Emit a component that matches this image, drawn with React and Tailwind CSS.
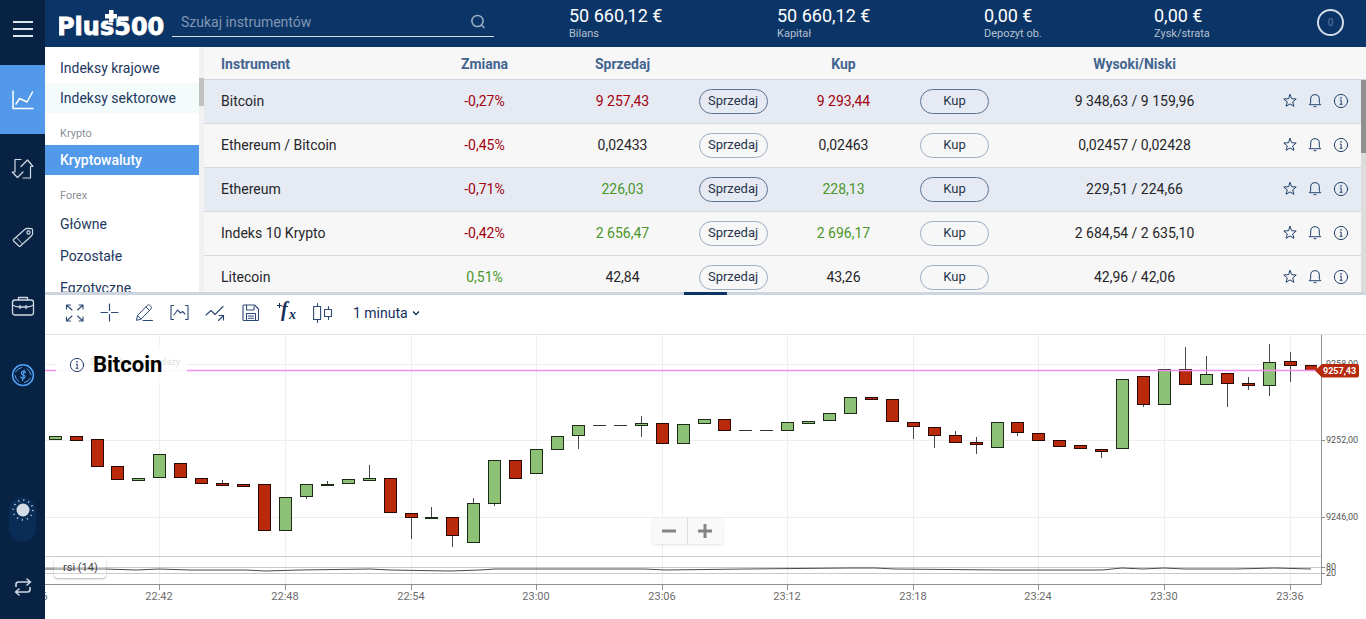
import React, { useState } from 'react';
import clsx from 'clsx';

const categories = [
  { title: null, items: ['Indeksy krajowe', 'Indeksy sektorowe'] },
  { title: 'Krypto', items: ['Kryptowaluty'] },
  { title: 'Forex', items: ['Główne', 'Pozostałe', 'Egzotyczne'] },
];

const balances = [
  { label: 'Bilans', value: '50 660,12 €' },
  { label: 'Kapitał', value: '50 660,12 €' },
  { label: 'Depozyt ob.', value: '0,00 €' },
  { label: 'Zysk/strata', value: '0,00 €' },
];

const instruments = [
  { name: 'Bitcoin', change: '-0,27%', sell: '9 257,43', buy: '9 293,44', range: '9 348,63 / 9 159,96', trend: 'down', marked: true },
  { name: 'Ethereum / Bitcoin', change: '-0,45%', sell: '0,02433', buy: '0,02463', range: '0,02457 / 0,02428' },
  { name: 'Ethereum', change: '-0,71%', sell: '226,03', buy: '228,13', range: '229,51 / 224,66', trend: 'up', marked: true },
  { name: 'Indeks 10 Krypto', change: '-0,42%', sell: '2 656,47', buy: '2 696,17', range: '2 684,54 / 2 635,10', trend: 'up' },
  { name: 'Litecoin', change: '0,51%', sell: '42,84', buy: '43,26', range: '42,96 / 42,06' },
];

const trendColor = { up: 'text-[#4b962a]', down: 'text-[#a3000f]' };

// [direction, body top, body bottom, high, low], one per minute
const candles = [
  ['u', 101, 104], ['d', 101, 105], ['d', 104, 131], ['d', 131, 144], ['u', 143, 145],
  ['u', 119, 142], ['d', 128, 142], ['d', 143, 148], ['d', 148, 150, 145], ['d', 149, 151],
  ['d', 149, 195], ['u', 162, 195], ['u', 149, 161, 149, 163], ['u', 149, 150, 146], ['u', 144, 148],
  ['u', 143, 145, 130], ['d', 143, 177], ['d', 178, 182, 178, 203], ['u', 182, 183, 172], ['d', 182, 200, 182, 211],
  ['u', 168, 207, 163], ['u', 125, 168, 125, 170], ['d', 125, 143], ['u', 114, 138], ['u', 101, 114],
  ['u', 90, 100, 90, 113], ['f', 90, 90], ['f', 90, 90], ['u', 88, 90, 81, 101], ['d', 88, 108],
  ['u', 89, 108], ['u', 84, 88], ['d', 84, 95], ['f', 95, 95], ['f', 95, 95],
  ['u', 87, 95], ['u', 86, 88], ['u', 78, 85], ['u', 62, 78], ['d', 62, 64],
  ['d', 64, 86], ['d', 87, 91, 87, 103], ['d', 92, 100, 92, 112], ['d', 100, 107, 96], ['d', 107, 109, 102, 118],
  ['u', 87, 112], ['d', 87, 97, 87, 100], ['d', 98, 105], ['d', 105, 111], ['d', 110, 113],
  ['d', 114, 116, 114, 122], ['u', 44, 113], ['d', 41, 69, 41, 71], ['u', 34, 69], ['d', 34, 49, 12],
  ['u', 39, 49, 21], ['d', 38, 48, 38, 71], ['d', 48, 50, 42, 54], ['u', 27, 50, 9, 60], ['d', 26, 30, 17, 46],
  ['d', 30, 35],
];

const candleX = (i) => Math.round(9.7 + i * 20.93);

const times = ['22:36', '22:42', '22:48', '22:54', '23:00', '23:06', '23:12', '23:18', '23:24', '23:30', '23:36'];
const timeX = (i) => candleX(i * 6 - 1);

const rsi =
  '0,234 60,234 91,235 114,234 145,235 200,235 220,236 255,235 325,234 345,235 405,236 435,235 450,234 492,234 600,234 620,235 700,234 805,233 830,233 850,234 955,235 1057,235 1077,233 1098,234 1119,233 1140,234 1190,234 1230,233 1266,234';

const Icon = ({ size = 24, children, className, width = 1.2 }) => (
  <svg
    width={size}
    height={size}
    viewBox={`0 0 ${size} ${size}`}
    fill="none"
    stroke="currentColor"
    strokeWidth={width}
    strokeLinecap="round"
    strokeLinejoin="round"
    className={className}
    aria-hidden="true"
  >
    {children}
  </svg>
);

const InfoIcon = () => (
  <Icon size={16} width={1}>
    <circle cx="8" cy="8" r="6.6" />
    <path d="M7.200 7.200h1v3.800M7 11.300h2" />
    <circle cx="8" cy="4.900" r=".8" fill="currentColor" stroke="none" />
  </Icon>
);

const navItems = [
  {
    label: 'Handel',
    icon: (
      <Icon width={1.5}>
        <path d="M2 3v17.500h20" />
        <path d="M5 16l3.500-5.500L16 14l5.500-10" />
      </Icon>
    ),
  },
  {
    label: 'Otwarte pozycje',
    icon: (
      <Icon width={1.2}>
        <path d="M10 2.500H4V15H1.200l5.300 5.500L12 15" />
        <path d="M10 9.500L16.500 3l5.500 6.500h-2.500V21h-7.500" />
      </Icon>
    ),
  },
  {
    label: 'Zlecenia',
    icon: (
      <Icon>
        <path d="M2.500 13.500L14 3.200q1-.9 2.500-.9l4 .3q1 .2 1 1.200l.1 3.700q0 1.200-1 2.200L9.500 20q-.8.700-1.600 0l-5.300-5q-.7-.8-.1-1.500z" />
        <circle cx="17.500" cy="6.500" r="1.600" />
        <path d="M5.500 11.500l5.500 6" strokeWidth=".9" />
      </Icon>
    ),
  },
  {
    label: 'Zamknięte pozycje',
    icon: (
      <Icon width={1.3}>
        <rect x="1.500" y="5" width="21" height="15" rx="2.500" />
        <path d="M7.500 5V2.500h9V5M1.500 10q3 2 7 2h7q4 0 7-2" />
        <path d="M9 10.500v3M15 10.500v3" />
      </Icon>
    ),
  },
  {
    label: 'Fundusze',
    icon: (
      <Icon className="text-[#4fa3f5]" width={1.5}>
        <circle cx="12" cy="11.200" r="10.400" />
        <path d="M4.500 8q2-3.500 6-4.500M19.500 14q-2 3.500-6 4.500M4 11.500q.5 4 4 6.200M20 11q-.5-4-4-6.200" strokeWidth="1" />
        <path d="M14.500 8.500q-1.400-1.400-3-.9-1.500.6-1 2 .4.900 1.700 1.300 1.800.6 1.700 2-.3 1.400-1.800 1.500-1.600 0-2.600-1.200M13.200 6l-1.600 10.500" strokeWidth="1.200" />
      </Icon>
    ),
  },
];

const drawTools = [
  {
    label: 'Pełny ekran',
    icon: (
      <Icon size={20} width={1.1}>
        <path d="M1.500 6V2h4M1.500 2L7 7M14 2h4v4M18 2l-5.500 5M1.500 14v4h4M1.500 18L7 13M18 14v4h-4M18 18l-5.500-5" />
      </Icon>
    ),
  },
  {
    label: 'Celownik',
    icon: (
      <Icon size={20} width={1.2}>
        <path d="M9.500 1v6.500M9.500 11.500V18M1 9.500h6.500M11.500 9.500H18" />
      </Icon>
    ),
  },
  {
    label: 'Rysuj',
    icon: (
      <Icon size={20} width={1}>
        <path d="M1.500 17l1-4.500L12.500 2.200q1-1 2 0l1.600 1.600q1 1 0 2L6 16zM2.500 12.500L6 16M11 4l3.500 3.500M8 17.500h9.500" />
      </Icon>
    ),
  },
  {
    label: 'Wzory',
    icon: (
      <Icon size={20} width={1.1}>
        <path d="M3.500 2.500H1v14h2.500M15.500 2.500h2.500v14h-2.500M4 12l3.500-5 3 3 2-1.500 2.500 2.500" />
      </Icon>
    ),
  },
];

const chartTools = [
  {
    label: 'Porównaj',
    icon: (
      <Icon size={20} width={1.1}>
        <path d="M1 12l5-4.500 4 4 8-8M18.500 12.500l-5 5M14 12.500h4.500V17" />
      </Icon>
    ),
  },
  {
    label: 'Zapisz',
    icon: (
      <Icon size={20} width={1.1}>
        <path d="M2 3q0-1 1-1h10.500l4 4V16.500q0 1-1 1H3q-1 0-1-1zM5.500 2v5h7.500V3.500M5.500 17.500v-7h9v7M7.500 13h5M7.500 15.200h5" />
      </Icon>
    ),
  },
  {
    label: 'Wskaźniki',
    icon: (
      <span className="relative block h-5 w-5 font-[Liberation_Serif,serif] font-bold italic leading-5 text-[#14305a]">
        <span className="absolute -top-1 left-1 text-xl leading-5">f</span>
        <span className="absolute left-3 top-1 text-sm leading-4">x</span>
        <svg width="5" height="5" viewBox="0 0 5 5" className="absolute left-0 top-0" aria-hidden="true">
          <path d="M2.500 0v5M0 2.500h5" stroke="currentColor" />
        </svg>
      </span>
    ),
  },
  {
    label: 'Typ wykresu',
    icon: (
      <Icon size={20} width={1.1}>
        <path d="M.600 3.500h7v13H.600zM4.500 .6v2.900M4.500 16.500v3M11.500 6.500h7v7h-7zM15.500 3.500v3M15.500 13.500v3" />
      </Icon>
    ),
  },
];

const Logo = () => (
  <a href="#" aria-label="Plus500" className="block shrink-0">
    <svg width="110" height="30" viewBox="0 0 110 30" fill="#fff">
      <text x="-2" y="27" className="font-[DejaVu_Sans,sans-serif] text-[24px] font-bold" stroke="#fff" strokeWidth=".8">
        Plus500
      </text>
      <path d="M50 2h4.500v4H58v4.500h-3.500v3.500H50v-3.500h-4V6h4z" stroke="#0c3567" strokeWidth="1.200" className="[paint-order:stroke]" />
    </svg>
  </a>
);

const Sidebar = ({ active, onSelect }) => (
  <nav className="flex w-[45px] shrink-0 flex-col bg-[#082244] text-[#cfd8e3]">
    <button type="button" aria-label="Menu" className="flex h-[65px] flex-col items-center gap-[5px] pt-[21px]">
      <span className="h-[2px] w-5 bg-[#dfe5ec]" />
      <span className="h-[2px] w-5 bg-[#dfe5ec]" />
      <span className="h-[2px] w-5 bg-[#dfe5ec]" />
    </button>
    {navItems.map((item, i) => (
      <button
        key={item.label}
        type="button"
        aria-label={item.label}
        onClick={() => onSelect(i)}
        className={clsx('flex h-[69px] items-center justify-center', active === i && 'bg-[#5299ea] text-white')}
      >
        {item.icon}
      </button>
    ))}
    <div className="mt-auto flex flex-col items-center pb-5">
      <button type="button" aria-label="Motyw" className="flex h-[45px] w-[27px] justify-center rounded-full bg-[#0a2d57] pt-px">
        <svg width="24" height="24" viewBox="0 0 24 24" aria-hidden="true">
          <circle cx="12" cy="12" r="6.500" fill="#d3dbe5" />
          <circle cx="12" cy="12" r="9.800" fill="none" stroke="#c3cdd9" strokeWidth="1.800" strokeDasharray="1.100 4.030" />
        </svg>
      </button>
      <button type="button" aria-label="Zmień konto" className="mt-[33px] flex h-6 w-6 items-center justify-center">
        <Icon size={20} width={1.6}>
          <path d="M14 2l3.500 3L14 8M17 5H5.500Q3 5 3 7.500V9.500M6 12l-3.500 3L6 18M3 15h11.500q2.500 0 2.500-2.500V10.500" />
        </Icon>
      </button>
    </div>
  </nav>
);

const Header = () => (
  <header className="flex h-[47px] shrink-0 items-start bg-[#0c3567] pl-[14px] pr-[22px] text-white">
    <div className="pt-2">
      <Logo />
    </div>
    <div className="ml-[3px] mt-2 flex h-[29px] w-[322px] shrink-0 items-center border-b border-[#d5dde7] pl-[9px] pr-2">
      <input
        type="text"
        aria-label="Szukaj instrumentów"
        placeholder="Szukaj instrumentów"
        className="min-w-0 flex-1 bg-transparent text-sm outline-none placeholder:text-[#8096b3]"
      />
      <Icon size={16} className="text-[#9eb0c6]" width={1.5}>
        <circle cx="7.500" cy="7" r="5.600" />
        <path d="M11.500 11l2.500 2.500" />
      </Icon>
    </div>
    <dl className="ml-[75px] grid flex-1 grid-cols-[208px_207px_170px_1fr] pt-[6px]">
      {balances.map((b) => (
        <div key={b.label} className="flex flex-col-reverse justify-end">
          <dt className="text-[11px] leading-4 text-[#b4c1d1]">{b.label}</dt>
          <dd className="text-lg leading-5">{b.value}</dd>
        </div>
      ))}
    </dl>
    <button
      type="button"
      aria-label="Powiadomienia"
      className="mt-[9px] flex h-[27px] w-[27px] items-center justify-center rounded-full border-2 border-[#d5dde7] text-[10px] text-[#5f7b9e]"
    >
      0
    </button>
  </header>
);

const CategoryList = ({ selected, onSelect }) => (
  <div className="flex w-[159px] shrink-0 bg-white">
    <div className="min-w-0 flex-1 overflow-hidden pt-[6px]">
      {categories.map((group) => (
        <div key={group.title || 'indeksy'} className={clsx('flex flex-col', group.title === 'Forex' && 'gap-[2px]')}>
          {group.title && <h3 className="flex h-8 items-center pl-[15px] pt-[10px] text-[11px] text-[#8a8f96]">{group.title}</h3>}
          {group.items.map((item) => (
            <button
              key={item}
              type="button"
              onClick={() => onSelect(item)}
              className={clsx(
                'h-[30px] pl-[15px] text-left text-sm',
                selected === item ? 'bg-[#5299ea] font-medium text-white' : 'text-[#1c3760]',
                item === 'Indeksy sektorowe' && 'bg-[#f4fcfb]'
              )}
            >
              {item}
            </button>
          ))}
        </div>
      ))}
    </div>
    <div className="w-[5px] bg-[#f1f1f1] pt-[31px]">
      <div className="h-7 bg-[#c1c1c1]" />
    </div>
  </div>
);

const TradeButton = ({ marked, children }) => (
  <button
    type="button"
    className={clsx('mx-auto block h-[25px] w-[69px] rounded-full border text-[13px] text-[#26354d]', marked ? 'border-[#5d7594]' : 'border-[#9dadc3]')}
  >
    {children}
  </button>
);

const InstrumentTable = () => (
  <div className="flex min-w-0 flex-1 overflow-hidden bg-[#f7f7f7]">
    <div className="min-w-0 flex-1">
      <table className="w-full table-fixed border-separate border-spacing-0 text-center text-sm text-[#26262a]">
        <colgroup>
          <col />
          <col className="w-[139px]" />
          <col className="w-[137px]" />
          <col className="w-[84px]" />
          <col className="w-[137px]" />
          <col className="w-[85px]" />
          <col className="w-[275px]" />
          <col className="w-[89px]" />
        </colgroup>
        <thead>
          <tr className="h-[33px] text-[#43648f] [&>th]:border-b [&>th]:border-[#ccd5e0] [&>th]:pt-px [&>th]:font-bold">
            <th className="pl-[17px] text-left">Instrument</th>
            <th>Zmiana</th>
            <th>Sprzedaj</th>
            <th />
            <th>Kup</th>
            <th />
            <th>Wysoki/Niski</th>
            <th />
          </tr>
        </thead>
        <tbody>
          {instruments.map((row) => (
            <tr key={row.name} className={clsx('h-11 [&>td]:border-b [&>td]:border-[#d8dadd]', row.marked && 'bg-[#e6ebf3]')}>
              <td className="pb-[2px] pl-[17px] text-left">{row.name}</td>
              <td className={clsx('pb-[2px]', row.change.startsWith('-') ? trendColor.down : trendColor.up)}>{row.change}</td>
              <td className={clsx('pb-[2px]', trendColor[row.trend])}>{row.sell}</td>
              <td>
                <TradeButton marked={row.marked}>Sprzedaj</TradeButton>
              </td>
              <td className={clsx('pb-[2px]', trendColor[row.trend])}>{row.buy}</td>
              <td>
                <TradeButton marked={row.marked}>Kup</TradeButton>
              </td>
              <td className="pb-[2px]">{row.range}</td>
              <td className="pb-[2px]">
                <div className="flex items-center gap-[9px] pl-[10px] text-[#21406b]">
                  <button type="button" aria-label="Ulubione">
                    <Icon size={16} width={1}>
                      <path d="M8 1.500l1.700 4.200 4.500.3-3.500 2.900 1.200 4.400L8 10.900l-3.900 2.400 1.200-4.400L1.800 6l4.500-.3z" strokeLinejoin="miter" />
                    </Icon>
                  </button>
                  <button type="button" aria-label="Alert">
                    <Icon size={16} width={1}>
                      <path d="M2.500 11.500q1.200-.8 1.200-2.500V6q0-4.300 4.300-4.300T12.300 6v3q0 1.700 1.200 2.500zM7 13.700h2" />
                    </Icon>
                  </button>
                  <button type="button" aria-label="Informacje" className="ml-px">
                    <InfoIcon />
                  </button>
                </div>
              </td>
            </tr>
          ))}
        </tbody>
      </table>
    </div>
    <div className="flex w-[5px] flex-col">
      <div className="h-[33px] shrink-0 border-b border-[#ccd5e0]" />
      <div className="flex-1 bg-[#dcdcdc]">
        <div className="h-[73px] bg-[#8f8f8f]" />
      </div>
    </div>
  </div>
);

const Toolbar = () => (
  <div className="flex h-10 shrink-0 items-center border-b border-[#e2e2e2] bg-white pb-1 pl-3 text-[#2c4a73]">
    {drawTools.map((tool) => (
      <button key={tool.label} type="button" aria-label={tool.label} className="flex w-[35px] justify-center">
        {tool.icon}
      </button>
    ))}
    {chartTools.map((tool) => (
      <button key={tool.label} type="button" aria-label={tool.label} className="flex w-9 justify-center">
        {tool.icon}
      </button>
    ))}
    <button type="button" className="ml-3 flex items-center gap-1 text-sm text-[#14305a]">
      1 minuta
      <svg width="8" height="6" viewBox="0 0 8 6" fill="none" stroke="currentColor" strokeWidth="1.300" aria-hidden="true">
        <path d="M1 1.500l3 3 3-3" />
      </svg>
    </button>
  </div>
);

const Candle = ({ x, data }) => {
  const [dir, top, bottom, high = top, low = bottom] = data;
  if (dir === 'f') {
    return <path d={`M${x - 6} ${top + 0.5}h13`} stroke="#333" />;
  }
  return (
    <g>
      <path d={`M${x + 0.5} ${high}V${low + 1}`} stroke="#45494d" />
      <rect
        x={x - 5.5}
        y={top + 0.5}
        width="12"
        height={bottom - top}
        fill={dir === 'u' ? '#8cc176' : '#b9290c'}
        stroke={dir === 'u' ? '#1c2b16' : '#2a0802'}
      />
    </g>
  );
};

const Chart = () => (
  <div className="relative bg-white">
    <svg viewBox="0 0 1321 284" className="block h-auto w-full font-[Roboto,sans-serif]" role="img" aria-label="Bitcoin, 1 minuta">
      <defs>
        <clipPath id="plot">
          <rect x="0" y="0" width="1272" height="250" />
        </clipPath>
      </defs>
      <g stroke="#eeeeee">
        <path d="M0 29.500h1276M0 105.500h1276M0 182.500h1276" />
        {times.slice(1).map((t, i) => (
          <path key={t} d={`M${timeX(i + 1) + 0.5} 0V249`} />
        ))}
      </g>
      <path d="M0 221.500h1276M0 232.500h1276M0 238.500h1276" stroke="#c9c9c9" />
      <g clipPath="url(#plot)">
        {candles.map((c, i) => (
          <Candle key={i} x={candleX(i)} data={c} />
        ))}
        <polyline points={rsi} fill="none" stroke="#4a4a4a" />
      </g>
      <path d="M0 35.500h1276" stroke="#f48df0" strokeWidth="1.500" />
      <path d="M0 249.500h1276.500V0M1277 105.500h3M1277 182.500h3M1277 232.500h3M1277 238.500h3" fill="none" stroke="#8f8f8f" />
      <g fill="#6b6b6b" className="text-[11px]" textAnchor="middle">
        {times.map((t, i) => (
          <g key={t}>
            {i > 0 && <path d={`M${timeX(i) + 0.5} 250v5`} stroke="#8f8f8f" />}
            <text x={timeX(i)} y="265">{t}</text>
          </g>
        ))}
      </g>
      <g fill="#555" className="text-[9px]">
        <text x="1281" y="32">9258,00</text>
        <text x="1281" y="108">9252,00</text>
        <text x="1281" y="185">9246,00</text>
        <text x="1281" y="235">80</text>
        <text x="1281" y="241">20</text>
      </g>
      <path d="M1270 35.500l7-6.500h35q2 0 2 2v9.500q0 2-2 2h-35z" fill="#b52a0c" />
      <text x="1278" y="39" fill="#fff" className="text-[9px] font-bold">9257,43</text>
    </svg>

    <div className="absolute left-[11px] top-[11px] flex h-[37px] w-[131px] items-center gap-2 bg-white/90 pl-[13px]">
      <span className="absolute left-[34px] top-[10px] text-[9px] leading-3 text-[#dedede]">Bitcoin kurs sprzedaży</span>
      <span className="text-[#21406b]">
        <InfoIcon />
      </span>
      <h2 className="relative pt-px text-[22px] font-bold leading-6 text-black">Bitcoin</h2>
    </div>

    <div className="absolute bottom-[75px] left-1/2 flex h-[26px] w-[71px] -translate-x-[54px] rounded-sm bg-[#f8f8f8]/90 text-[#858585] shadow">
      <button type="button" aria-label="Pomniejsz" className="flex flex-1 items-center justify-center border-r border-[#dcdcdc]">
        <Icon size={16} width={3}><path d="M1 8h14" strokeLinecap="butt" /></Icon>
      </button>
      <button type="button" aria-label="Powiększ" className="flex flex-1 items-center justify-center">
        <Icon size={16} width={3}><path d="M1 8h14M8 1v14" strokeLinecap="butt" /></Icon>
      </button>
    </div>

    <div className="absolute bottom-[41px] left-[9px] h-5 w-[52px] rounded-sm bg-white/20 pl-[9px] text-[11px] leading-5 text-[#444] shadow-[0_1px_2px_rgba(0,0,0,0.3)]">
      rsi (14)
    </div>
  </div>
);

const App = () => {
  const [active, setActive] = useState(0);
  const [category, setCategory] = useState('Kryptowaluty');

  return (
    <div className="flex min-h-screen bg-white font-[Roboto,sans-serif]">
      <Sidebar active={active} onSelect={setActive} />
      <main className="flex min-w-0 flex-1 flex-col">
        <Header />
        <section className="flex h-[245px] shrink-0">
          <CategoryList selected={category} onSelect={setCategory} />
          <InstrumentTable />
        </section>
        <div className="flex h-[3px] shrink-0 justify-center bg-[#ccd5e0]">
          <div className="w-[43px] bg-[#0c3567]" />
        </div>
        <Toolbar />
        <Chart />
      </main>
    </div>
  );
};

export default App;
